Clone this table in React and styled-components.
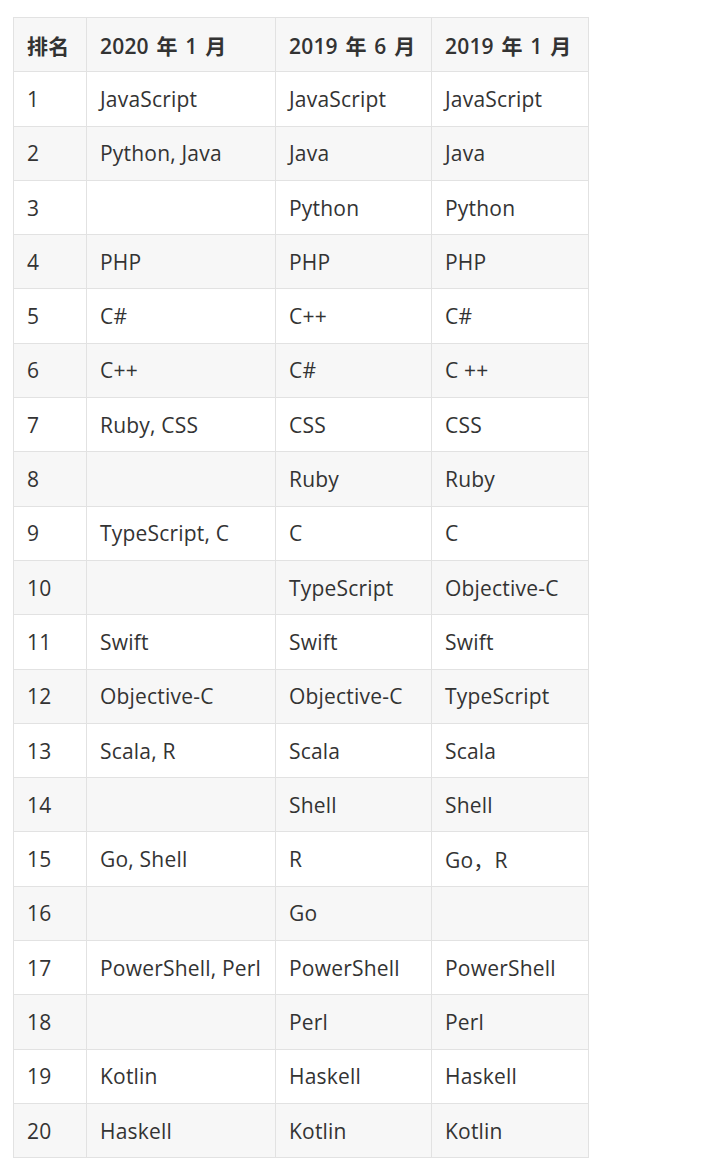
import styled, { createGlobalStyle } from "styled-components";

const GlobalStyle = createGlobalStyle`
    body {
        margin: 0;
        background: #ffffff;
        font-family: "Open Sans", "Noto Sans CJK SC", sans-serif;
    }
`

const rows = [
    ["1", "JavaScript", "JavaScript", "JavaScript"],
    ["2", "Python, Java", "Java", "Java"],
    ["3", "", "Python", "Python"],
    ["4", "PHP", "PHP", "PHP"],
    ["5", "C#", "C++", "C#"],
    ["6", "C++", "C#", "C ++"],
    ["7", "Ruby, CSS", "CSS", "CSS"],
    ["8", "", "Ruby", "Ruby"],
    ["9", "TypeScript, C", "C", "C"],
    ["10", "", "TypeScript", "Objective-C"],
    ["11", "Swift", "Swift", "Swift"],
    ["12", "Objective-C", "Objective-C", "TypeScript"],
    ["13", "Scala, R", "Scala", "Scala"],
    ["14", "", "Shell", "Shell"],
    ["15", "Go, Shell", "R", "Go，R"],
    ["16", "", "Go", ""],
    ["17", "PowerShell, Perl", "PowerShell", "PowerShell"],
    ["18", "", "Perl", "Perl"],
    ["19", "Kotlin", "Haskell", "Haskell"],
    ["20", "Haskell", "Kotlin", "Kotlin"],
];

const headers = ["排名", "2020 年 1 月", "2019 年 6 月", "2019 年 1 月"];
const widths = [73, 189, 156, 157];

export default function App() {
    return (
        <Page>
            <GlobalStyle />
            <RankTable>
                <colgroup>
                    {widths.map((w, i) => <col key={i} style={{ width: w }} />)}
                </colgroup>
                <thead>
                    <Row $shaded>
                        {headers.map((h) => <HeadCell key={h}>{h}</HeadCell>)}
                    </Row>
                </thead>
                <tbody>
                    {rows.map((r, i) => (
                        <Row key={r[0]} $shaded={i % 2 === 1}>
                            {r.map((c, j) => <Cell key={j}>{c}</Cell>)}
                        </Row>
                    ))}
                </tbody>
            </RankTable>
        </Page>
    );
}

const Page = styled.div`
    padding: 17px 0 0 13px;
`

const RankTable = styled.table`
    border-collapse: collapse;
    table-layout: fixed;
    width: 576px;
    color: #333333;
    font-size: 21px;
    letter-spacing: 0.2px;
`

const Row = styled.tr`
    height: 54.3px;
    background: ${(p) => (p.$shaded ? "#f7f7f7" : "#ffffff")};
`

const HeadCell = styled.th`
    border: 1px solid #e2e2e2;
    padding: 0 13px;
    text-align: left;
    font-weight: 600;
    word-spacing: 2px;
    white-space: nowrap;
`

const Cell = styled.td`
    border: 1px solid #e2e2e2;
    padding: 0 13px;
    white-space: nowrap;
`
